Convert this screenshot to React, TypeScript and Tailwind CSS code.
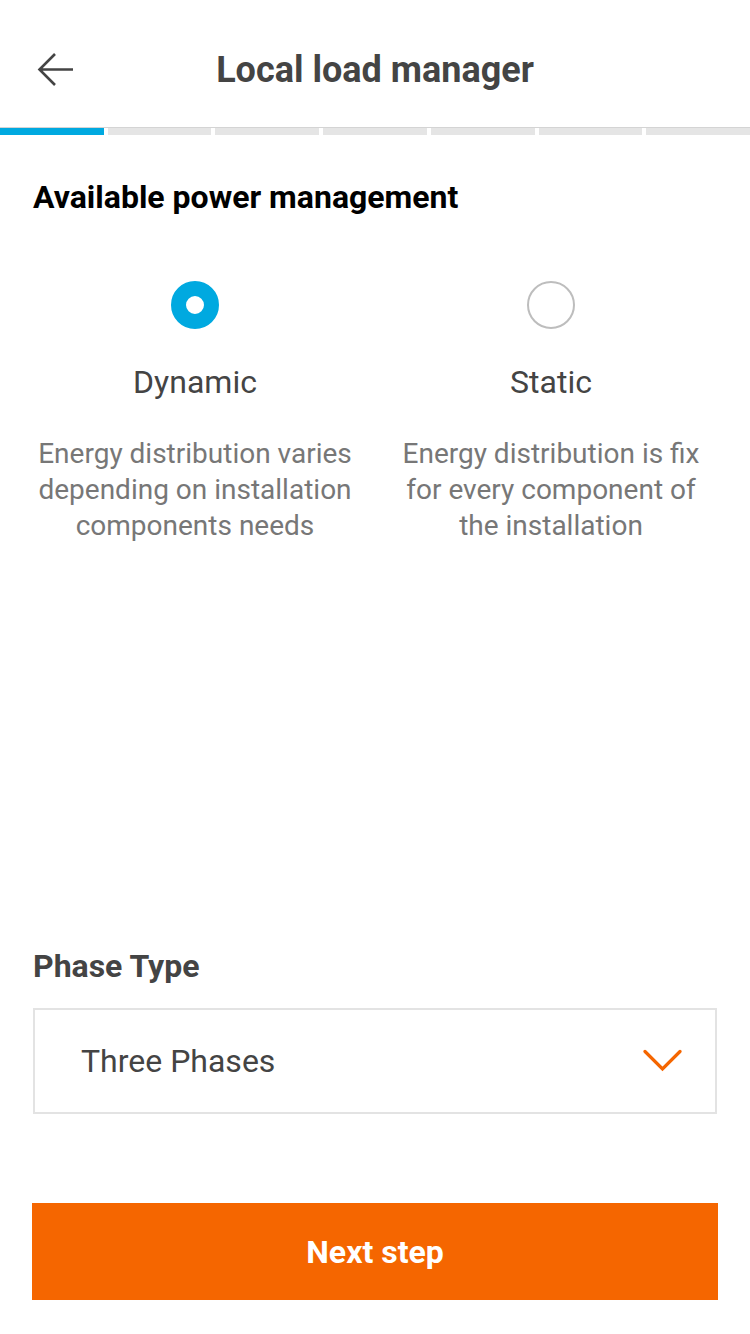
import React from "react";

function BackArrow() {
  return (
    <svg width="40" height="40" viewBox="0 0 40 40" fill="none">
      <path d="M37 19.5H4M19 4L3.5 19.5L19 35" stroke="#444" strokeWidth="2.6" />
    </svg>
  );
}

function Chevron() {
  return (
    <svg width="40" height="24" viewBox="0 0 40 24" fill="none">
      <path d="M2 2.5L19.5 20L37 2.5" stroke="#f56600" strokeWidth="3.2" strokeLinecap="round" />
    </svg>
  );
}

function Option({ label, lines, active }: { label: string; lines: string[]; active?: boolean }) {
  return (
    <div className="flex flex-col items-center">
      {active ? (
        <div className="w-[48px] h-[48px] rounded-full border-[15px] border-[#00a9e0]" />
      ) : (
        <div className="w-[48px] h-[48px] rounded-full border-2 border-[#bdbdbd]" />
      )}
      <p className="mt-[35px] text-[32px] leading-[36px] text-[#444]">{label}</p>
      <p className="mt-[36px] text-[28px] leading-[36px] text-[#777] text-center">
        {lines.map((l, i) => (
          <React.Fragment key={i}>
            {l}
            {i < lines.length - 1 && <br />}
          </React.Fragment>
        ))}
      </p>
    </div>
  );
}

export default function App() {
  const steps = [0, 1, 2, 3, 4, 5, 6];
  return (
    <div className="w-[750px] h-[1334px] bg-white flex flex-col font-['Roboto',sans-serif]">
      <div className="h-[127px] flex items-center pt-[12px]">
        <div className="w-[110px] pl-[36px] flex items-center">
          <BackArrow />
        </div>
        <h1 className="flex-1 text-center text-[36px] font-bold text-[#444] tracking-[0px]">
          Local load manager
        </h1>
        <div className="w-[110px]" />
      </div>

      <div className="border-t border-[#d4d4d4] flex gap-[4px] h-[8px]">
        {steps.map((s) => (
          <div key={s} className={s === 0 ? "flex-1 bg-[#00a9e0]" : "flex-1 bg-[#e5e5e5]"} />
        ))}
      </div>

      <h2 className="mt-[44px] px-[33px] text-[32px] leading-[36px] font-bold text-black">
        Available power management
      </h2>

      <div className="mt-[66px] pl-[17px] grid grid-cols-[356px_356px]">
        <Option
          label="Dynamic"
          active
          lines={["Energy distribution varies", "depending on installation", "components needs"]}
        />
        <Option
          label="Static"
          lines={["Energy distribution is fix", "for every component of", "the installation"]}
        />
      </div>

      <p className="mt-[404px] px-[33px] text-[32px] leading-[36px] font-bold text-[#444]">
        Phase Type
      </p>

      <div className="mx-[33px] mt-[24px] h-[106px] border-2 border-[#e3e3e3] flex items-center justify-between pl-[46px] pr-[32px]">
        <span className="text-[32px] text-[#444]">Three Phases</span>
        <Chevron />
      </div>

      <button className="mx-[32px] mt-[89px] h-[97px] bg-[#f56600] text-white text-[32px] font-bold">
        Next step
      </button>
    </div>
  );
}
